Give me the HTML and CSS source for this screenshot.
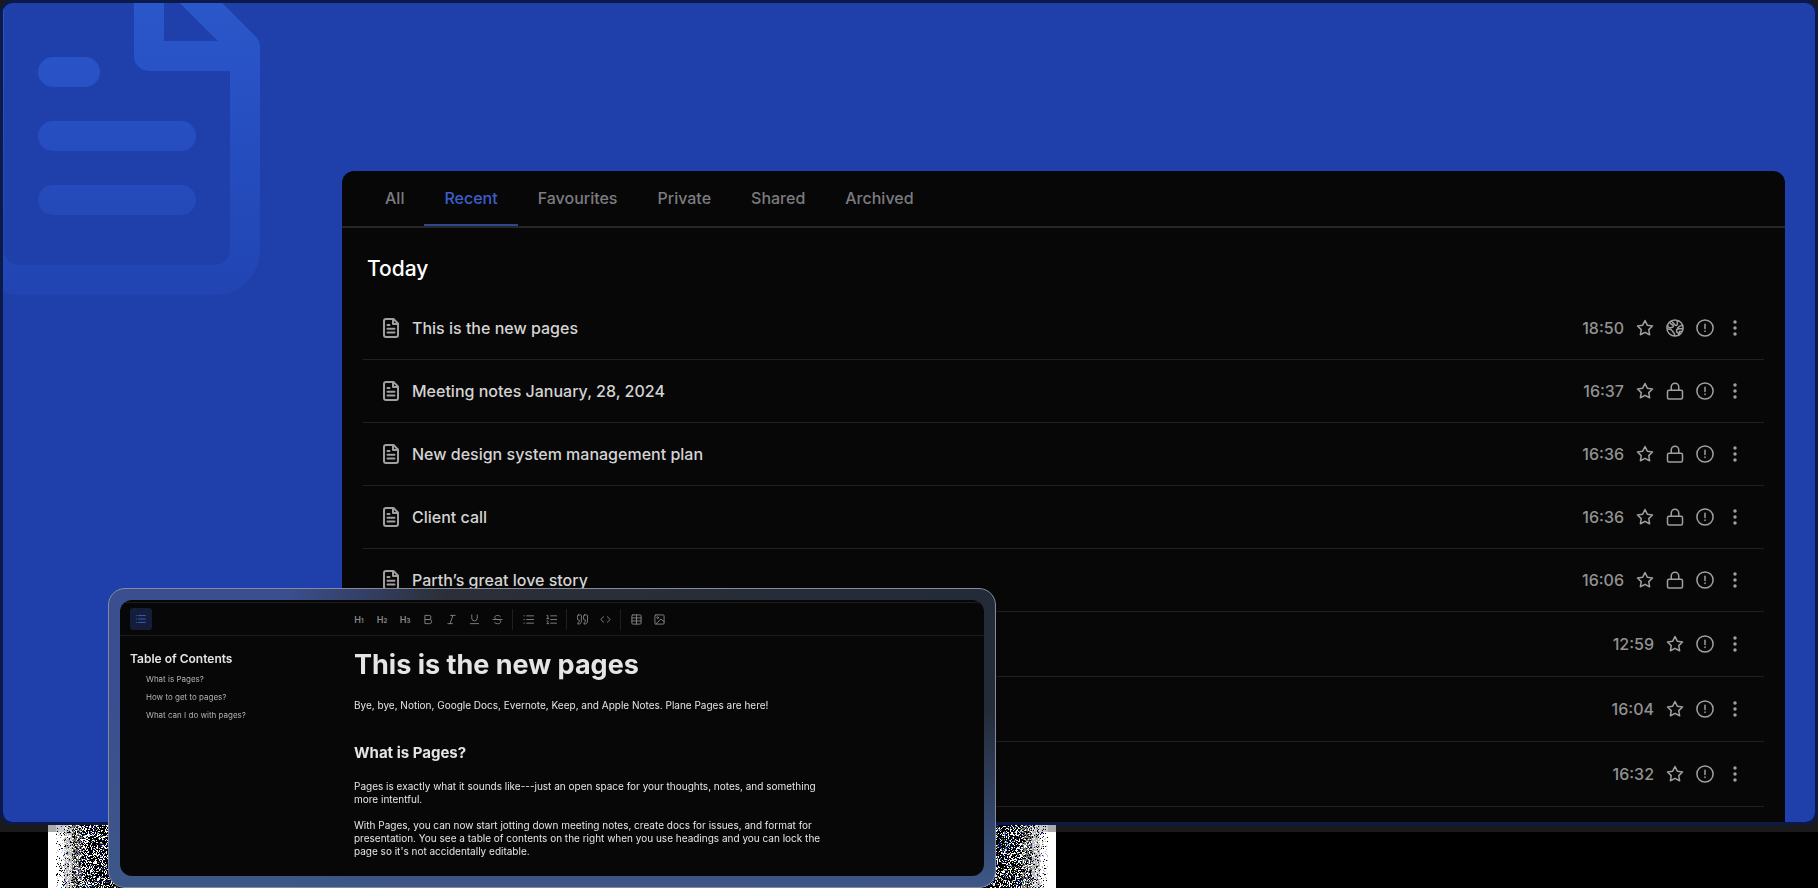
FILE: index.html
```html
<!DOCTYPE html>
<html lang="en">
<head>
<meta charset="utf-8">
<title>Pages</title>
<link rel="stylesheet" href="styles.css">
</head>
<body>
<svg class="sprite" aria-hidden="true">
  <symbol id="i-doc" viewBox="0 0 16 20"><path d="M3 1h7.500L15 5.500V17a2 2 0 0 1-2 2H3a2 2 0 0 1-2-2V3a2 2 0 0 1 2-2zM10 1v5h5M4.500 7h2M4.500 10.700h7M4.500 14.500h7"/></symbol>
  <symbol id="i-star" viewBox="0 0 24 24"><path d="M12 2l3.090 6.260L22 9.270l-5 4.870 1.180 6.880L12 17.770l-6.180 3.250L7 14.140 2 9.270l6.910-1.010L12 2z"/></symbol>
  <symbol id="i-lock" viewBox="0 0 24 24"><rect x="2" y="11" width="20" height="11.500" rx="2"/><path d="M7 11V6.500a5 5 0 0 1 10 0V11"/></symbol>
  <symbol id="i-info" viewBox="0 0 24 24"><circle cx="12" cy="12" r="10.800"/><path d="M12 7v5.500M12 16v.600"/></symbol>
  <symbol id="i-globe" viewBox="0 0 24 24"><circle cx="12" cy="12" r="10.800"/><path d="M5 4.500c1 3 3 2 4.500 4S8 12 5 11.500 2.500 9 2.500 9M7 2.800c2 1 3 3.200 5 5.200s4-1 3-3 2-2.500 2-2.500M2.500 13.500c3-.5 5 .5 6.500 3s3 3 2.500 5.500M21.500 8.500c-3 0-4.500 1.500-6 3.500M22 13h-5c-2 0-3 1-3 3s1 2 2 2.500 1 3 1 3M18 19.500v-3h3"/></symbol>
  <symbol id="i-dots" viewBox="0 0 24 24"><g fill="currentColor" stroke="none"><circle cx="12" cy="4" r="2.300"/><circle cx="12" cy="12" r="2.300"/><circle cx="12" cy="20" r="2.300"/></g></symbol>
</svg>

<main class="page">
  <section class="hero">
    <svg class="hero-art" viewBox="0 0 264 300" fill="none" aria-hidden="true">
      <defs><linearGradient id="fade" x1="0" y1="0" x2="0" y2="295" gradientUnits="userSpaceOnUse"><stop offset="0" stop-color="#2a57c9"/><stop offset=".25" stop-color="#2852c5"/><stop offset="1" stop-color="#2144b2"/></linearGradient></defs>
      <g stroke="url(#fade)" stroke-width="30">
        <path d="M146 -20V53H242M150 -48L242 44V247A30 30 0 0 1 212 277H16A30 30 0 0 1 -14 247V-60"/>
        <g stroke-linecap="round"><path d="M50 69.010L82 69M50 133.010L178 133M50 197.010L178 197"/></g>
      </g>
    </svg>

    <section class="panel">
      <nav class="tabs">
        <a href="#all">All</a>
        <a href="#recent" class="active" aria-current="page">Recent</a>
        <a href="#favourites">Favourites</a>
        <a href="#private">Private</a>
        <a href="#shared">Shared</a>
        <a href="#archived">Archived</a>
      </nav>
      <div class="list">
        <h2>Today</h2>
        <ul id="rows">
          <li class="row"><svg class="doc"><use href="#i-doc"/></svg><a href="#p1">This is the new pages</a><time>18:50</time><button aria-label="Favourite"><svg><use href="#i-star"/></svg></button><button aria-label="Public"><svg><use href="#i-globe"/></svg></button><button aria-label="Info"><svg><use href="#i-info"/></svg></button><button aria-label="More"><svg><use href="#i-dots"/></svg></button></li>
          <li class="row"><svg class="doc"><use href="#i-doc"/></svg><a href="#p2">Meeting notes January, 28, 2024</a><time>16:37</time><button aria-label="Favourite"><svg><use href="#i-star"/></svg></button><button aria-label="Private"><svg><use href="#i-lock"/></svg></button><button aria-label="Info"><svg><use href="#i-info"/></svg></button><button aria-label="More"><svg><use href="#i-dots"/></svg></button></li>
          <li class="row"><svg class="doc"><use href="#i-doc"/></svg><a href="#p3">New design system management plan</a><time>16:36</time><button aria-label="Favourite"><svg><use href="#i-star"/></svg></button><button aria-label="Private"><svg><use href="#i-lock"/></svg></button><button aria-label="Info"><svg><use href="#i-info"/></svg></button><button aria-label="More"><svg><use href="#i-dots"/></svg></button></li>
          <li class="row"><svg class="doc"><use href="#i-doc"/></svg><a href="#p4">Client call</a><time>16:36</time><button aria-label="Favourite"><svg><use href="#i-star"/></svg></button><button aria-label="Private"><svg><use href="#i-lock"/></svg></button><button aria-label="Info"><svg><use href="#i-info"/></svg></button><button aria-label="More"><svg><use href="#i-dots"/></svg></button></li>
          <li class="row"><svg class="doc"><use href="#i-doc"/></svg><a href="#p5">Parth’s great love story</a><time>16:06</time><button aria-label="Favourite"><svg><use href="#i-star"/></svg></button><button aria-label="Private"><svg><use href="#i-lock"/></svg></button><button aria-label="Info"><svg><use href="#i-info"/></svg></button><button aria-label="More"><svg><use href="#i-dots"/></svg></button></li>
          <li class="row shared"><time>12:59</time><button aria-label="Favourite"><svg><use href="#i-star"/></svg></button><button aria-label="Info"><svg><use href="#i-info"/></svg></button><button aria-label="More"><svg><use href="#i-dots"/></svg></button></li>
          <li class="row shared"><time>16:04</time><button aria-label="Favourite"><svg><use href="#i-star"/></svg></button><button aria-label="Info"><svg><use href="#i-info"/></svg></button><button aria-label="More"><svg><use href="#i-dots"/></svg></button></li>
          <li class="row shared"><time>16:32</time><button aria-label="Favourite"><svg><use href="#i-star"/></svg></button><button aria-label="Info"><svg><use href="#i-info"/></svg></button><button aria-label="More"><svg><use href="#i-dots"/></svg></button></li>
        </ul>
      </div>
    </section>
  </section>
  <div class="floor"><canvas id="grain" width="1008" height="63"></canvas></div>

  <section class="editor">
    <div class="editor-body">
      <div class="toolbar">
        <div class="outline"><button class="toc-btn" aria-label="Outline"><svg viewBox="0 0 14 14"><path d="M4 3h8M4 7h8M4 11h8M1.500 3h.5M1.500 7h.5M1.500 11h.5"/></svg></button></div>
        <div class="tools">
          <button>H<small>1</small></button>
          <button>H<small>2</small></button>
          <button>H<small>3</small></button>
          <button aria-label="Bold"><svg viewBox="0 0 12 12"><path d="M2.500 1.500h4a2.250 2.250 0 0 1 0 4.500h-4zM2.500 6h4.700a2.250 2.250 0 0 1 0 4.500H2.500z"/></svg></button>
          <button aria-label="Italic"><svg viewBox="0 0 12 12"><path d="M5 1.500h5M2 10.500h5M7.500 1.500l-3 9"/></svg></button>
          <button aria-label="Underline"><svg viewBox="0 0 12 12"><path d="M3 1v3.500a3 3 0 0 0 6 0V1M1.500 10.500h9"/></svg></button>
          <button aria-label="Strikethrough"><svg viewBox="0 0 12 12"><path d="M9 2.500C8 1.200 3 .8 3 3.700 3 5 4.500 6 6 6s3.500.5 3.500 2.300c0 3-5 2.800-6.500 1.200M1 6h10"/></svg></button>
          <i></i>
          <button aria-label="Bulleted list"><svg viewBox="0 0 12 12"><path d="M4 2h7.500M4 6h7.500M4 10h7.500M1 2h.5M1 6h.5M1 10h.5"/></svg></button>
          <button aria-label="Numbered list"><svg viewBox="0 0 12 12"><path d="M5 2h6.500M5 6h6.500M5 10h6.500M1 1.500h1V5M1 5h2M1 7.500c1.500-.5 2 .5 1 1.500l-1 1.500h2"/></svg></button>
          <i></i>
          <button aria-label="Quote"><svg viewBox="0 0 12 12"><path d="M1.500 1h2.300c.6 0 1 .4 1 1v5.500C4.800 10 3.500 11 1 11V9.500c1 0 1.500-.5 1.500-2V6.500h-1a1 1 0 0 1-1-1V2a1 1 0 0 1 1-1zM8.200 1h2.300c.6 0 1 .4 1 1v5.500c0 2.500-1.300 3.500-3.800 3.500V9.500c1 0 1.500-.5 1.500-2V6.500h-1a1 1 0 0 1-1-1V2a1 1 0 0 1 1-1z"/></svg></button>
          <button aria-label="Code"><svg viewBox="0 0 12 12"><path d="M8 3l3.200 3L8 9M4 3L.8 6 4 9"/></svg></button>
          <i></i>
          <button aria-label="Table"><svg viewBox="0 0 12 12"><path d="M2 1h8a1 1 0 0 1 1 1v8a1 1 0 0 1-1 1H2a1 1 0 0 1-1-1V2a1 1 0 0 1 1-1zM1 4.300h10M1 7.600h10M6 1v10"/></svg></button>
          <button aria-label="Image"><svg viewBox="0 0 12 12"><path d="M2 1h8a1 1 0 0 1 1 1v8a1 1 0 0 1-1 1H2a1 1 0 0 1-1-1V2a1 1 0 0 1 1-1zM2 11l5.500-5.500L11 8.500"/><circle cx="4" cy="4" r="1"/></svg></button>
        </div>
      </div>
      <div class="doc-area">
        <aside class="outline">
          <h3>Table of Contents</h3>
          <a href="#what">What is Pages?</a>
          <a href="#how">How to get to pages?</a>
          <a href="#can">What can I do with pages?</a>
        </aside>
        <article>
          <h1>This is the new pages</h1>
          <p>Bye, bye, Notion, Google Docs, Evernote, Keep, and Apple Notes. Plane Pages are here!</p>
          <h2 id="what">What is Pages?</h2>
          <p>Pages is exactly what it sounds like---just an open space for your thoughts, notes, and something<br>more intentful.</p>
          <p>With Pages, you can now start jotting down meeting notes, create docs for issues, and format for<br>presentation. You see a table of contents on the right when you use headings and you can lock the<br>page so it's not accidentally editable.</p>
        </article>
      </div>
    </div>
  </section>
</main>
<script src="grain.js"></script>
</body>
</html>
```
FILE: styles.css
```css
* { box-sizing: border-box; margin: 0; }
body { background: #000; font-family: Inter, "Liberation Sans", sans-serif; color: #e5e5e5; }
button { background: none; border: 0; padding: 0; color: inherit; font: inherit; display: flex; align-items: center; justify-content: center; }
a { color: inherit; text-decoration: none; }
svg { fill: none; stroke: currentColor; stroke-linecap: round; stroke-linejoin: round; }
.sprite { position: absolute; width: 0; height: 0; }

.page { position: relative; min-height: 100vh; overflow: hidden; display: flex; flex-direction: column; background: #1a1a1a; }
.hero { position: relative; height: calc(100vh - 63px); border: 3px solid #0b1a49; border-radius: 12px; background: #1f3fab; background-clip: padding-box; overflow: hidden; padding: 168px 30px 0 339px; display: flex; }
.hero-art { position: absolute; left: 0; top: 0; width: 264px; height: 300px; stroke: none; stroke-linecap: butt; }

.panel { flex: 1; min-width: 0; background: #070707; border-radius: 12px 12px 0 0; overflow: hidden; }
.tabs { display: flex; height: 57px; padding-left: 23px; border-bottom: 2px solid #262626; }
.tabs a { padding: 0 20px; line-height: 54px; font-size: 16px; font-weight: 500; color: #7c7c80; }
.tabs .active { color: #3c5fcc; border-bottom: 2px solid #2f4687; }
.list { padding: 25px 21px 0 21px; }
.list h2 { padding-left: 4px; font-size: 21px; line-height: 32px; font-weight: 500; color: #fff; margin-bottom: 12px; }
.list ul { list-style: none; padding: 0; }
.row { display: flex; align-items: center; height: 63px; padding: 0 17px 0 20px; border-bottom: 1px solid #202020; font-size: 16px; font-weight: 500; color: #929292; }
.row.shared { height: 65px; justify-content: flex-end; }
.row .doc { width: 16px; height: 20px; stroke-width: 2; margin-right: 13px; color: #a0a0a0; }
.row a { flex: 1; color: #d4d4d4; }
.row time { margin-right: 12px; }
.row button { width: 18px; height: 18px; margin-right: 12px; color: #a0a0a0; }
.row button:last-child { margin-right: 3px; }
.row button svg { width: 18px; height: 18px; stroke-width: 2; }

.floor { height: 63px; padding-left: 48px; background: linear-gradient(#1a1a1a 7px, #000 7px); }
#grain { display: block; }

.editor { position: absolute; left: 108px; bottom: 0; width: 888px; height: 300px; padding: 11px; border: 1px solid #858b9b; border-radius: 17px; background: linear-gradient(180deg, transparent 40%, #3d5788 100%), linear-gradient(90deg, #3b4f90 0, #3b4f90 20%, #2c2f37 38%, #232b38 100%); background-origin: border-box; }
.editor-body { height: 276px; overflow: hidden; border-radius: 12px; background: #070707; padding-top: 2px; }
.toolbar { display: flex; align-items: center; height: 34px; border-top: 1px solid #1d1d1f; border-bottom: 1px solid #1d1d1f; }
.outline { width: 234px; padding-left: 10px; }
.toolbar .outline { width: 232px; }
.toc-btn { width: 22px; height: 22px; border-radius: 3px; background: #141e3b; color: #3f66d0; }
.toc-btn svg { width: 12px; height: 12px; }
.tools { display: flex; align-items: center; gap: 9px; color: #858588; }
.tools button { width: 14px; height: 14px; font-size: 9px; font-weight: 600; }
.tools small { font-size: 6px; padding-top: 2px; font-weight: 700; }
.tools svg { width: 11px; height: 11px; }
.tools i { width: 1px; height: 21px; margin: 0 -1px; background: #1f1f21; }
.doc-area { display: flex; }
.doc-area .outline { padding-top: 14px; }
.outline h3 { font-size: 12px; line-height: 18px; font-weight: 600; margin-bottom: 2px; }
.outline a { display: block; padding-left: 16px; font-size: 8px; line-height: 18px; color: #b2b2b8; }
article { flex: 1; padding-top: 12px; }
article h1 { font-size: 27px; line-height: 34px; margin-bottom: 17px; font-weight: 700; }
article h2 { font-size: 15px; line-height: 22px; margin: 30px 0 16px; font-weight: 700; }
article p { font-size: 10px; line-height: 13px; margin-bottom: 13px; }
```
FILE: grain.js
```js
// Speckled fade on both ends of the strip under the hero, seeded so it is stable.
const canvas = document.getElementById('grain');
const ctx = canvas.getContext('2d');
let seed = 7;
const rand = () => (seed = (seed * 16807) % 2147483647) / 2147483647;
const tints = ['#2222f0', '#2222f0', '#d8d070', '#888', '#20c8e0', '#141470', '#707028'];
for (let y = 0; y < 63; y++) {
  for (let x = 0; x < 1008; x++) {
    const d = Math.min(x, 1007 - x);
    if (d > 90) continue;
    const r = rand();
    let c = '#000';
    if (d < 8) c = y < 7 ? '#aaa' : '#fff';
    else if (d < 16) c = r < .06 ? '#000' : r < .15 ? '#bbb' : y < 7 ? '#ccc' : '#fff';
    else if (d < 24) c = r < .12 ? '#000' : r < .35 ? '#fff' : '#bbb';
    else if (d < 34) c = r < .3 ? '#000' : r < .55 ? '#fff' : '#777';
    else if (r < .38 - (d - 34) / 220) c = '#fff';
    if (d >= 12 && rand() < (d < 34 ? .06 : .15)) c = tints[Math.floor(rand() * tints.length)];
    ctx.fillStyle = c;
    ctx.fillRect(x, y, 1, 1);
  }
}
```
